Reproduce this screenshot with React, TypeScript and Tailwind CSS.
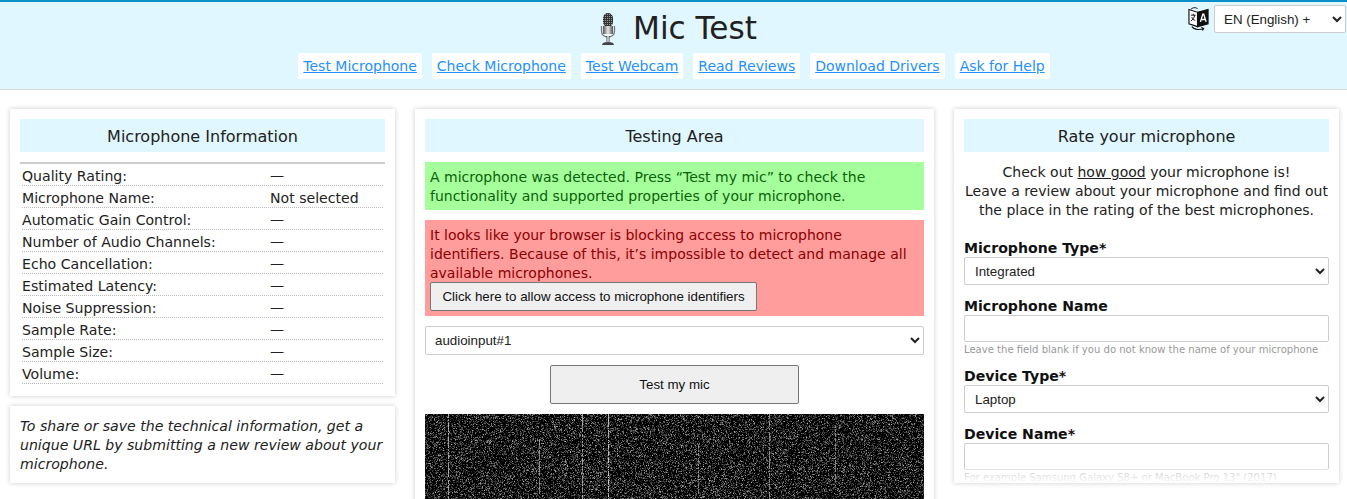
import { useEffect, useRef } from 'react';

const font = "font-['DejaVu_Sans',Verdana,sans-serif]";
const navLinks = ['Test Microphone', 'Check Microphone', 'Test Webcam', 'Read Reviews', 'Download Drivers', 'Ask for Help'];
const infoRows = [
  ['Quality Rating:', '—'],
  ['Microphone Name:', 'Not selected'],
  ['Automatic Gain Control:', '—'],
  ['Number of Audio Channels:', '—'],
  ['Echo Cancellation:', '—'],
  ['Estimated Latency:', '—'],
  ['Noise Suppression:', '—'],
  ['Sample Rate:', '—'],
  ['Sample Size:', '—'],
  ['Volume:', '—'],
];

function MicIcon() {
  return (
    <svg width="18" height="34" viewBox="0 0 18 34">
      <defs>
        <linearGradient id="mic-metal" x1="0" x2="1" y1="0" y2="0">
          <stop offset="0" stopColor="#555" />
          <stop offset="0.5" stopColor="#e8e8e8" />
          <stop offset="1" stopColor="#555" />
        </linearGradient>
        <pattern id="mic-mesh" width="2" height="2" patternUnits="userSpaceOnUse">
          <rect width="2" height="2" fill="#333" />
          <rect width="1" height="1" fill="#999" />
        </pattern>
      </defs>
      <rect x="4" y="1" width="10" height="14" rx="5" fill="url(#mic-mesh)" />
      <rect x="4" y="14" width="10" height="8" fill="url(#mic-metal)" />
      <path d="M2.5 14v5c0 4 3 6 6.500 6s6.500-2 6.500-6v-5" fill="none" stroke="#777" strokeWidth="1.300" />
      <rect x="7.500" y="24" width="3" height="6" fill="url(#mic-metal)" />
      <path d="M3 33c0-2 2-3 6-3s6 1 6 3z" fill="#444" />
    </svg>
  );
}

function TranslateIcon() {
  return (
    <svg width="21" height="26" viewBox="0 0 22 26">
      <path d="M1 3l9 3v15l-9-3z" fill="#fff" stroke="#111" strokeWidth="1.200" />
      <path d="M10 6l11-3v15l-11 3z" fill="#111" stroke="#111" strokeWidth="1.200" />
      <path d="M3 9h5M5.500 7.500v1.500M7 9c-.5 3-2 5-4 6M4 11c.5 2 2 3 3.500 3.500" fill="none" stroke="#111" strokeWidth="1" />
      <path d="M13 16l2.500-8h1l2.500 8M14 13.500h4" fill="none" stroke="#fff" strokeWidth="1.400" />
      <path d="M4 21c2 3 8 4 12 2M14 21.500l2.500 1.500-1.500 2" fill="none" stroke="#111" strokeWidth="1.100" />
      <path d="M3 3c1-2 5-2.500 7-1" fill="none" stroke="#111" strokeWidth="1" />
    </svg>
  );
}

// noisy spectrogram strip
function NoiseCanvas() {
  const ref = useRef<HTMLCanvasElement>(null);

  useEffect(() => {
    const ctx = ref.current?.getContext('2d');
    if (!ctx) return;
    let seed = 17;
    const rand = () => {
      seed = (seed * 16807) % 2147483647;
      return seed / 2147483647;
    };
    ctx.fillStyle = '#000';
    ctx.fillRect(0, 0, 499, 85);
    for (let y = 0; y < 85; y++) {
      for (let x = 0; x < 499; x++) {
        if (rand() < 0.42) {
          const v = Math.floor(35 + rand() * rand() * 150);
          ctx.fillStyle = `rgb(${v},${v},${v})`;
          ctx.fillRect(x, y, 1, 1);
        }
      }
    }
    for (const [x, from, to, level] of [
      [23, 0, 85, 130],
      [114, 25, 80, 100],
      [157, 0, 85, 120],
      [183, 0, 85, 150],
      [273, 30, 80, 100],
      [344, 0, 85, 100],
      [410, 10, 70, 90],
    ]) {
      for (let y = from; y < to; y++) {
        if (rand() < 0.8) {
          const v = Math.floor(level + rand() * 65);
          ctx.fillStyle = `rgb(${v},${v},${v})`;
          ctx.fillRect(x, y, 1, 1);
        }
      }
    }
  }, []);

  return <canvas ref={ref} width={499} height={85} className="block h-[85px] w-full shrink-0 blur-[0.4px]" />;
}

function CardTitle({ children }: { children: string }) {
  return <h2 className="flex h-[33px] items-center justify-center bg-[#e0f7ff] pt-[2px] text-[16px] font-normal text-[#212121]">{children}</h2>;
}

function Field({ label, children }: { label: string; children: React.ReactNode }) {
  return (
    <div>
      <label className="block text-[14.100px] leading-[18px] font-bold text-[#111]">{label}</label>
      {children}
    </div>
  );
}

function SelectBox({ value }: { value: string }) {
  return (
    <select className="mb-[1px] block h-[28px] w-full rounded-[2px] border border-[#ccc] bg-white pl-[6px] font-['Liberation_Sans',Arial,sans-serif] text-[13.330px] text-[#222]" defaultValue={value}>
      <option>{value}</option>
    </select>
  );
}

export default function App() {
  return (
    <div className={`${font} h-[499px] overflow-hidden bg-white text-[14.100px] text-[#212121]`}>
      <header className="relative h-[90px] border-t-2 border-b border-t-[#0a8fc7] border-b-[#ddd] bg-[#e0f7ff]">
        <div className="flex h-[49px] items-center justify-center gap-[16px] pt-[4px] pl-[9px]">
          <MicIcon />
          <h1 className="text-[31.200px] leading-none font-normal text-[#212121]">Mic Test</h1>
        </div>
        <nav className="mt-[2px] flex justify-center gap-[10px] pl-[1px]">
          {navLinks.map((link) => (
            <a key={link} href="#" className="rounded-[2px] bg-white px-[5px] py-[3px] text-[14px] leading-[20px] text-[#1e90ff] underline">
              {link}
            </a>
          ))}
        </nav>
        <div className="absolute top-[3px] right-[1px] flex items-center gap-[5px]">
          <TranslateIcon />
          <select className="h-[28px] w-[132px] rounded-[2px] border border-[#ccc] bg-white pl-[5px] font-['Liberation_Sans',Arial,sans-serif] text-[13.330px] text-[#222]" defaultValue="EN (English) +">
            <option>EN (English) +</option>
          </select>
        </div>
      </header>

      <main className="flex items-start gap-[20px] pt-[19px] pl-[10px]">
        <div className="flex w-[385px] shrink-0 flex-col gap-[10px]">
          <section className="h-[287px] bg-white p-[10px] shadow-[0_0_5px_rgba(0,0,0,0.2)]">
            <CardTitle>Microphone Information</CardTitle>
            <div className="mt-[10px] border-t-2 border-[#ccc]">
              {infoRows.map(([name, value]) => (
                <div key={name} className="mx-[2px] flex h-[22px] items-center border-b border-dotted border-[#bbb] pt-[4px] leading-none">
                  <span className="w-[248px] shrink-0">{name}</span>
                  <span>{value}</span>
                </div>
              ))}
            </div>
          </section>
          <section className="h-[77px] bg-white px-[10px] py-[11px] leading-[19px] italic shadow-[0_0_5px_rgba(0,0,0,0.2)]">
            To share or save the technical information, get a unique URL by submitting a new review about your microphone.
          </section>
        </div>

        <section className="flex h-[400px] w-[519px] shrink-0 flex-col overflow-hidden bg-white px-[10px] pt-[10px] text-[14px] shadow-[0_0_5px_rgba(0,0,0,0.2)]">
          <CardTitle>Testing Area</CardTitle>
          <div className="mt-[10px] h-[48px] bg-[#a5ff9a] px-[5px] pt-[6px] leading-[19px] text-[#0b5f0b]">
            A microphone was detected. Press “Test my mic” to check the functionality and supported properties of your microphone.
          </div>
          <div className="mt-[10px] h-[96px] bg-[#ff9c9c] px-[5px] pt-[6px] leading-[19px] text-[#8b0000]">
            It looks like your browser is blocking access to microphone identifiers. Because of this, it’s impossible to detect and manage all available microphones.
            <button className="-mt-[1px] block h-[29px] w-[327px] rounded-[2px] border border-[#767676] bg-[#efefef] font-['Liberation_Sans',Arial,sans-serif] text-[13.330px] text-[#111]">
              Click here to allow access to microphone identifiers
            </button>
          </div>
          <select className="mt-[10px] block h-[29px] w-full shrink-0 rounded-[2px] border border-[#ccc] bg-white pl-[5px] font-['Liberation_Sans',Arial,sans-serif] text-[13.330px] text-[#222]" defaultValue="audioinput#1">
            <option>audioinput#1</option>
          </select>
          <button className="mx-auto mt-[10px] block h-[39px] w-[249px] shrink-0 rounded-[2px] border border-[#767676] bg-[#efefef] font-['Liberation_Sans',Arial,sans-serif] text-[13.330px] text-[#111]">
            Test my mic
          </button>
          <div className="mt-[10px] overflow-hidden">
            <NoiseCanvas />
          </div>
        </section>

        <section className="relative h-[374px] w-[385px] shrink-0 overflow-hidden bg-white px-[10px] pt-[10px] shadow-[0_0_5px_rgba(0,0,0,0.2)]">
          <CardTitle>Rate your microphone</CardTitle>
          <p className="-mx-[2px] mt-[11px] text-center text-[14px] leading-[19px]">
            Check out <span className="underline">how good</span> your microphone is!
            <br />
            Leave a review about your microphone and find out the place in the rating of the best microphones.
          </p>
          <div className="mt-[19px] flex flex-col gap-[11px]">
            <Field label="Microphone Type*">
              <SelectBox value="Integrated" />
            </Field>
            <Field label="Microphone Name">
              <input className="block h-[27px] w-full rounded-[2px] border border-[#ccc] bg-white" />
              <p className="mt-[2px] text-[10.050px] leading-[12px] text-[#999]">Leave the field blank if you do not know the name of your microphone</p>
            </Field>
            <Field label="Device Type*">
              <SelectBox value="Laptop" />
            </Field>
            <Field label="Device Name*">
              <input className="block h-[27px] w-full rounded-[2px] border border-[#ccc] bg-white" />
              <p className="mt-[2px] text-[10.050px] leading-[12px] text-[#999]">For example Samsung Galaxy S8+ or MacBook Pro 13" (2017)</p>
            </Field>
          </div>
          <div className="absolute inset-x-0 bottom-0 h-[14px] bg-gradient-to-t from-white to-white/40" />
        </section>
      </main>
    </div>
  );
}
